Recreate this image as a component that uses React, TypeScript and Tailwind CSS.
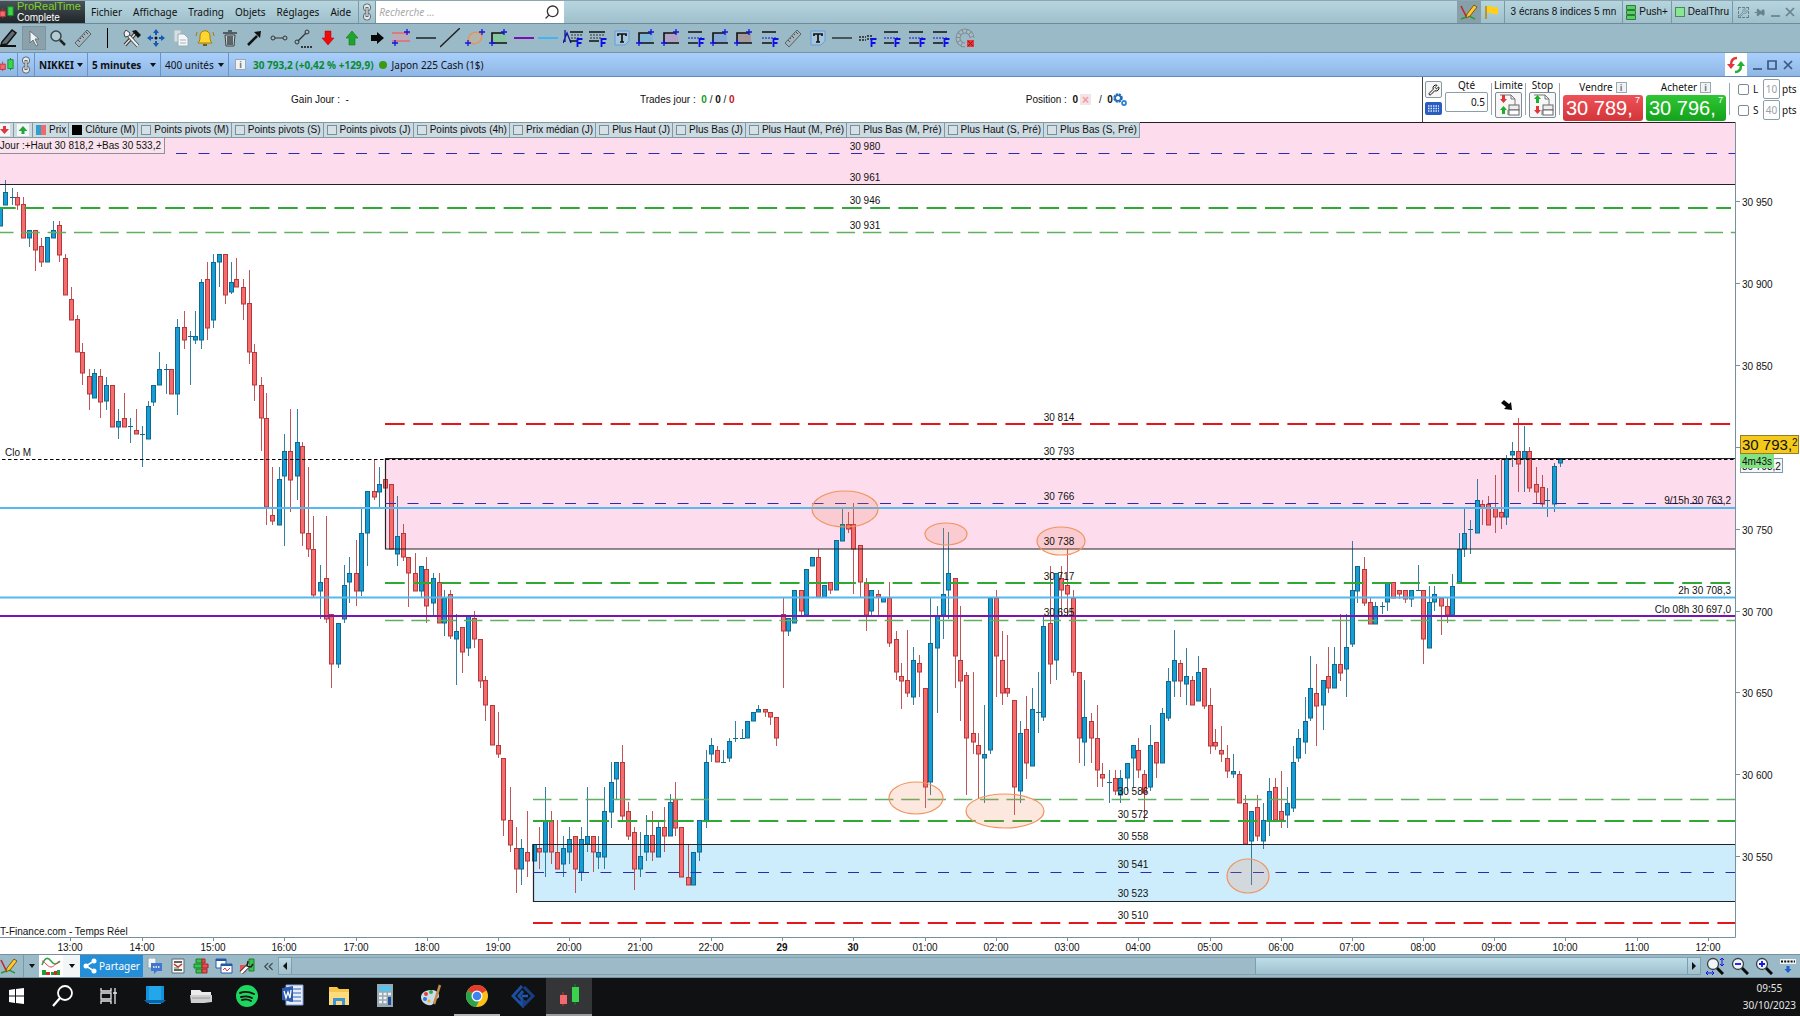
import type { ReactNode } from "react";
import { ChevronsLeft, Pin, Search, Wrench } from "lucide-react";

// dir, x, high, body top, body bottom, low
const CANDLES = `
u 0 208 208 226 226|u 5 180 192 205 205|u 12 188 197 197 205|d 17 192 197 205 210|d 23 197 204 238 238|u 29 230 230 238 247
d 35 230 230 250 271|d 41 238 246 262 267|u 47 237 237 262 262|u 53 221 230 238 238|d 59 221 225 255 262|d 65 254 258 295 295
d 71 287 299 320 320|d 77 315 319 352 352|d 82 343 352 373 385|d 89 369 376 394 410|u 94 369 373 398 398|d 100 369 376 402 418
u 106 377 385 401 410|d 112 385 385 427 427|u 118 409 421 427 439|d 124 393 418 427 427|u 130 418 426 426 443|d 136 409 430 434 434
u 142 426 434 434 467|u 148 401 406 439 439|u 153 385 385 402 406|u 159 352 369 385 385|u 166 364 369 369 394|d 171 369 369 394 394
u 177 319 327 394 415|d 184 311 327 340 349|u 190 331 336 336 385|u 195 311 336 340 344|u 201 279 282 340 349|d 207 262 279 328 340
u 213 254 262 320 328|u 219 254 254 262 287|d 225 254 254 295 304|u 231 262 282 292 294|d 236 258 279 287 287|d 243 279 287 304 320
d 249 270 303 352 364|d 254 344 352 385 401|d 261 377 385 418 451|d 266 393 418 507 525|d 272 467 515 521 525|u 279 467 479 525 525
u 284 434 451 476 546|d 290 409 451 480 512|u 297 409 442 476 500|d 302 442 446 533 546|d 308 467 533 549 557|d 313 516 549 595 597
u 320 565 582 591 619|d 326 516 578 619 623|d 331 614 614 664 688|u 338 623 623 664 668|u 344 565 585 619 623|u 349 557 573 582 603
d 356 540 573 591 606|u 361 508 533 591 596|u 367 491 491 533 566|d 374 459 491 497 500|u 379 467 484 492 507|d 385 479 479 488 488
d 391 484 484 549 549|u 397 496 536 554 566|d 403 524 533 557 561|d 408 557 557 573 607|d 415 553 573 591 591|u 421 566 566 591 597
d 426 557 569 606 623|u 433 573 578 603 616|d 439 573 582 623 623|u 444 590 598 623 636|d 450 590 594 636 639|u 456 614 631 639 685
d 462 627 627 652 673|u 468 615 615 648 656|d 474 611 618 639 648|d 480 639 639 681 688|d 485 676 680 705 721|d 492 705 705 745 745
d 498 712 745 754 758|d 503 758 758 820 836|d 510 787 820 845 852|d 516 827 848 869 893|u 521 839 848 869 885|d 527 811 852 861 877
u 534 844 844 861 861|d 539 827 848 852 869|u 545 787 820 852 877|d 551 811 820 852 864|d 557 820 852 869 869|u 563 836 848 864 877
u 569 827 839 852 864|d 575 836 836 869 893|u 581 827 839 872 881|u 587 787 836 844 852|d 593 836 836 852 872|u 598 836 852 857 869
u 604 787 811 857 869|u 611 762 782 812 828|u 616 762 762 779 799|d 622 745 762 816 821|d 628 802 811 836 840|d 634 827 832 869 890
u 640 832 856 869 877|u 646 815 835 852 861|d 652 811 835 852 861|u 658 820 827 857 857|d 664 807 827 836 852|u 670 794 802 836 836
d 675 782 799 828 836|d 681 827 827 877 877|d 688 845 877 885 885|u 693 852 852 885 885|u 699 820 820 852 861|u 706 750 762 821 828
u 711 738 745 754 762|d 717 746 750 762 762|u 723 750 762 762 762|u 729 738 741 758 762|u 735 721 738 738 742|u 742 729 738 738 738
u 747 721 721 738 738|u 753 712 712 721 721|u 758 705 709 712 712|d 765 709 709 712 717|d 770 712 712 717 725|d 776 717 717 738 746
d 783 598 614 631 688|u 788 618 618 631 636|u 794 590 590 623 623|d 801 590 590 611 615|u 806 569 569 615 615|u 812 557 557 566 566
d 818 549 557 597 597|u 824 585 585 597 597|d 830 582 582 590 594|u 836 540 540 590 590|u 842 508 524 541 541|d 848 512 524 529 533
d 853 503 524 549 594|d 860 545 545 582 597|d 866 578 582 615 631|u 871 590 590 611 615|d 878 590 594 597 615|u 883 597 597 602 602
d 889 582 598 643 647|d 896 631 639 672 680|d 901 663 676 681 709|d 907 630 680 693 697|u 913 647 660 697 705|d 919 655 663 672 697
d 925 688 688 787 808|u 930 598 643 782 795|u 937 606 615 648 713|u 943 528 594 615 639|u 948 532 573 590 619|d 955 578 578 656 688
d 960 606 660 681 721|d 966 672 675 738 795|d 973 672 733 742 754|d 978 733 745 754 799|u 984 705 754 758 803|u 990 598 598 750 754
d 996 590 598 656 697|d 1002 631 660 693 705|d 1007 635 688 693 697|d 1014 700 700 787 815|u 1020 721 733 791 803|d 1026 696 729 763 779
u 1032 688 709 766 766|u 1038 672 712 712 733|u 1043 615 626 717 721|d 1050 566 623 664 684|u 1056 573 573 660 680|d 1061 566 578 590 615
d 1067 549 585 594 615|d 1073 590 598 672 676|d 1079 672 672 738 763|u 1084 680 717 742 766|d 1091 713 721 738 763|d 1097 705 738 770 787
d 1102 763 774 778 787|u 1109 770 782 782 803|d 1115 770 778 791 795|u 1120 770 778 795 803|u 1127 763 763 778 791|u 1133 745 745 758 787
d 1138 738 750 770 778|d 1144 770 774 793 820|u 1150 725 745 787 791|d 1156 742 742 763 778|u 1162 708 713 763 763|u 1168 668 681 718 721
u 1174 630 660 681 697|d 1180 660 663 681 697|u 1186 648 676 684 705|d 1192 676 680 705 705|u 1198 656 672 701 701|d 1204 668 668 706 709
d 1210 688 705 746 754|d 1215 729 742 746 750|d 1221 726 750 754 762|d 1227 745 758 771 778|u 1233 754 771 774 778|d 1239 771 774 803 803
d 1245 795 803 844 844|u 1251 811 811 841 885|d 1257 795 807 836 841|u 1263 803 820 841 849|u 1269 778 791 821 836|d 1275 778 787 820 820
d 1281 771 811 820 828|u 1287 787 803 815 828|u 1293 746 762 808 812|u 1298 729 738 758 762|u 1305 697 721 742 754|u 1310 656 688 718 721
d 1316 664 693 706 746|u 1323 680 680 705 730|d 1328 647 676 688 693|u 1334 647 664 688 688|d 1340 614 664 673 681|u 1346 614 647 669 697
u 1352 541 590 644 647|u 1357 566 566 591 603|d 1364 557 569 603 606|d 1370 598 602 624 624|u 1375 602 606 624 624|u 1382 602 606 606 614
u 1387 582 582 602 611|d 1393 582 582 598 598|d 1399 590 590 594 599|d 1405 590 590 599 603|u 1411 590 590 599 607|u 1418 565 590 590 590
d 1423 590 590 639 664|u 1429 586 602 648 648|u 1434 586 594 602 611|d 1441 598 598 606 635|d 1447 598 606 615 623|u 1452 574 586 615 615
u 1459 533 549 582 582|u 1464 508 533 549 557|u 1470 520 529 529 554|u 1477 479 500 533 533|d 1482 500 504 508 525|d 1488 496 504 525 525
d 1495 475 508 517 533|d 1501 459 512 517 529|u 1506 455 459 517 525|u 1512 442 451 455 467|d 1518 418 451 464 492|u 1524 426 451 459 492
d 1529 447 451 488 492|d 1536 467 484 492 503|d 1542 475 487 504 507|u 1547 488 500 500 517|u 1554 463 466 504 512|u 1560 459 459 463 467`
  .trim()
  .split(/[|\n]/)
  .map((row) => {
    const [dir, ...values] = row.split(" ");
    const [x, high, top, bottom, low] = values.map(Number);
    return { up: dir === "u", x, high, top, bottom, low };
  });

const HOURS: [number, string][] = [
  [70, "13:00"], [142, "14:00"], [213, "15:00"], [284, "16:00"], [356, "17:00"], [427, "18:00"], [498, "19:00"], [569, "20:00"],
  [640, "21:00"], [711, "22:00"], [782, "29"], [853, "30"], [925, "01:00"], [996, "02:00"], [1067, "03:00"], [1138, "04:00"],
  [1210, "05:00"], [1281, "06:00"], [1352, "07:00"], [1423, "08:00"], [1494, "09:00"], [1565, "10:00"], [1637, "11:00"], [1708, "12:00"],
];

const PRICES: [number, string][] = [
  [202, "30 950"], [284, "30 900"], [366, "30 850"], [448, ""], [530, "30 750"], [612, "30 700"], [693, "30 650"], [775, "30 600"], [857, "30 550"],
];

const LEVELS: [number, number, string][] = [
  [865, 146, "30 980"], [865, 177, "30 961"], [865, 200, "30 946"], [865, 225, "30 931"],
  [1059, 417, "30 814"], [1059, 451, "30 793"], [1059, 496, "30 766"], [1059, 541, "30 738"], [1059, 576, "30 717"], [1059, 612, "30 695"],
  [1133, 791, "30 586"], [1133, 814, "30 572"], [1133, 836, "30 558"], [1133, 864, "30 541"], [1133, 893, "30 523"], [1133, 915, "30 510"],
];

const ELLIPSES = [
  [845, 509, 33, 18], [946, 534, 21, 11], [1061, 541, 24, 14], [916, 798, 27, 16], [1005, 811, 39, 17], [1248, 876, 21, 17],
];

const INDICATORS = [
  "Points pivots (M)", "Points pivots (S)", "Points pivots (J)", "Points pivots (4h)", "Prix médian (J)", "Plus Haut (J)", "Plus Bas (J)",
  "Plus Haut (M, Pré)", "Plus Bas (M, Pré)", "Plus Haut (S, Pré)", "Plus Bas (S, Pré)",
];

function Icon({ children, w = 20, h = 20 }: { children: ReactNode; w?: number; h?: number }) {
  return (
    <svg width={w} height={h} viewBox={`0 0 ${w} ${h}`} fill="none" className="shrink-0">
      {children}
    </svg>
  );
}

function Plus({ x, y }: { x: number; y: number }) {
  return <path d={`M${x - 3} ${y}h6M${x} ${y - 3}v6`} stroke="#1414e0" strokeWidth="1.3" />;
}

function F() {
  return <path d="M14.5 19v-8h5M14.5 15h4" stroke="#0d0dea" strokeWidth="1.8" />;
}

function Ruler() {
  return (
    <Icon>
      <path d="M2 15 14 2l4 4L6 19z" fill="#a4b3ba" stroke="#55656c" />
      <path d="m5 12 2 2M7 10l1 1M9 8l2 2M11 6l1 1M13 4l2 2" stroke="#44545c" />
    </Icon>
  );
}

function TextBox() {
  return (
    <Icon>
      <path d="M3 3h14v10l-4 4H3z" fill="#a6c6dc" stroke="#629be0" />
      <path d="M6 8V6h8v2M10 6v8M8 14h4" stroke="#111" strokeWidth="1.7" />
    </Icon>
  );
}

function FibLines() {
  return (
    <Icon>
      <path d="M3 4h14M3 15h10" stroke="#111" strokeWidth="1.6" />
      <path d="M3 10h14" stroke="#1414e0" strokeDasharray="2 1" />
      <F />
    </Icon>
  );
}

function RectTool({ fill }: { fill: string }) {
  return (
    <Icon>
      <path d="M3 5h14v10H3z" fill={fill} />
      <path d="M3 15V5h12M3 15h15" stroke="#111" strokeWidth="1.6" />
      <Plus x={15} y={4} />
      <Plus x={3} y={15} />
    </Icon>
  );
}

function FlatLine({ color, width = 2 }: { color: string; width?: number }) {
  return (
    <Icon>
      <path d="M0 10h20" stroke={color} strokeWidth={width} />
    </Icon>
  );
}

function Chain() {
  return (
    <svg width="10" height="18" viewBox="0 0 10 18" fill="none" stroke="#5c666b" className="shrink-0">
      <rect x="1.5" y="1" width="7" height="7" rx="3" fill="#e5e9eb" />
      <rect x="1.5" y="10" width="7" height="7" rx="3" fill="#e5e9eb" />
      <path d="M5 4v10" stroke="#5c666b" strokeWidth="3" />
      <path d="M5 5v8" stroke="#eef1f2" strokeWidth="1.2" />
    </svg>
  );
}

function CandlesIcon({ size = 16 }: { size?: number }) {
  return (
    <svg width={size} height={size} viewBox="0 0 16 16" className="shrink-0">
      <path d="M3 4v11" stroke="#c33" />
      <rect x="0" y="7" width="6" height="6" fill="#f4696b" stroke="#b8383b" />
      <path d="M12 0v14" stroke="#0a7a20" />
      <rect x="9" y="2" width="6" height="10" fill="#3bd34f" stroke="#178a2a" />
    </svg>
  );
}

function DrawIcon() {
  return (
    <Icon w={18} h={18}>
      <path d="M1 3l5 10 6-5" stroke="#c0282c" strokeWidth="1.6" />
      <path d="M1 16l8-3 6 3" stroke="#2a9a3a" strokeWidth="1.6" />
      <path d="M6 15l1-4 7-9 3 2-7 9z" fill="#ffc933" stroke="#7a5a10" />
    </Icon>
  );
}

const TOOLS: [string, ReactNode][] = [
  ["Crayon", <Icon><path d="M3 14 13 2l4 3L8 16l-6 1z" fill="#5d6d74" stroke="#111" strokeWidth="1.5" /><path d="M1 18h16" stroke="#111" strokeWidth="2" /></Icon>],
  ["Sélection", <Icon><path d="M6 3v12l3-3 3 6 2-1-3-6h4z" fill="#eef2f4" stroke="#66747b" /></Icon>],
  ["Loupe", <Icon><circle cx="8" cy="8" r="5" fill="#b4cbd4" stroke="#39474e" strokeWidth="1.5" /><path d="m12 12 5 5" stroke="#222" strokeWidth="2.5" /></Icon>],
  ["Règle", <Ruler />],
  ["", <span className="h-5 w-px bg-black" />],
  ["Outils", <Icon><path d="m3 17 10-11" stroke="#333" strokeWidth="3.5" /><path d="m3 17 10-11" stroke="#e8e8e8" strokeWidth="1.5" /><path d="M10 3l4-1 5 5-3 3z" fill="#111" /><path d="m5 6 11 12" stroke="#444" strokeWidth="3.5" /><path d="m5 6 11 12" stroke="#f2f2f2" strokeWidth="2" /><path d="M2 5l2-3 4 3-1 3-4 1z" fill="#f2f2f2" stroke="#444" /></Icon>],
  ["Déplacer", <Icon><path d="M10 1l3 4H7zM10 19l-3-4h6zM1 10l4-3v6zM19 10l-4 3V7z" fill="#1558b8" /><path d="M10 4v3M10 13v3M4 10h3M13 10h3" stroke="#1558b8" strokeWidth="2" /><circle cx="10" cy="10" r="1.5" fill="#111" /></Icon>],
  ["Copier", <Icon><path d="M3 2h7v12H3z" fill="#d5dee2" stroke="#a9b9c0" /><path d="M7 6h6l4 4v8H7z" fill="#f4f7f8" stroke="#9aabb3" /><path d="M9 12h6M9 15h6" stroke="#a3b4bc" /></Icon>],
  ["Alerte", <Icon><path d="M3 15c2-2 2-4 2-7 0-7 10-7 10 0 0 3 0 5 2 7z" fill="#ffd52e" stroke="#a67c00" /><path d="M8 16h4v2H8z" fill="#7c5c00" /><path d="M2 4 1 8M18 4l1 4" stroke="#a67c00" /></Icon>],
  ["Supprimer", <Icon><path d="M5 7h10l-1 11H6z" fill="#c8ced0" stroke="#3a4246" /><path d="M3 5h14M8 3h4M8 8v9M10 8v9M12 8v9" stroke="#3a4246" strokeWidth="1.5" /></Icon>],
  ["Flèche", <Icon><path d="m4 17 9-9" stroke="#111" strokeWidth="2.5" /><path d="M10 4l7-1-1 7z" fill="#111" /></Icon>],
  ["Segment", <Icon><path d="M6 10h8" stroke="#333" /><circle cx="4" cy="10" r="2" stroke="#333" /><circle cx="16" cy="10" r="2" stroke="#333" /></Icon>],
  ["Segment alerte", <Icon><path d="m5 13 8-8" stroke="#333" strokeWidth="1.3" /><circle cx="4" cy="14" r="2" stroke="#333" /><circle cx="14" cy="4" r="2" stroke="#333" /><path d="M8 19h11" stroke="#111" strokeWidth="1.5" strokeDasharray="2 1" /></Icon>],
  ["Flèche bas", <Icon><path d="M7 3h6v7h3l-6 7-6-7h3z" fill="#f00c0c" stroke="#a80000" strokeWidth=".5" /></Icon>],
  ["Flèche haut", <Icon><path d="M7 17h6v-7h3l-6-7-6 7h3z" fill="#20a52c" stroke="#0a6a14" strokeWidth=".5" /></Icon>],
  ["Flèche droite", <Icon><path d="M4 7h6V4l7 6-7 6v-3H4z" fill="#080808" /></Icon>],
  ["Zone", <Icon><path d="M2 5h16v8H2z" fill="#b9aeb8" /><path d="M1 5h18M1 13h18" stroke="#e86a72" strokeWidth="1.5" /><Plus x={16} y={4} /><Plus x={4} y={15} /></Icon>],
  ["Ligne horizontale", <FlatLine color="#3c484d" />],
  ["Droite", <Icon><path d="M0 19 20 0" stroke="#222" strokeWidth="1.5" /></Icon>],
  ["Ellipse", <Icon><ellipse cx="10" cy="10" rx="7" ry="5.5" fill="#b5b4aa" stroke="#ec8f52" strokeWidth="1.3" transform="rotate(-25 10 10)" /><Plus x={17} y={4} /><Plus x={3} y={15} /></Icon>],
  ["Rectangle vert", <RectTool fill="#86c4a2" />],
  ["Ligne violette", <FlatLine color="#7a10b4" />],
  ["Ligne bleue", <FlatLine color="#43b4f0" />],
  ["Retracement", <Icon><path d="M2 2v12M0 15l4-10 4 10" stroke="#1414a0" strokeWidth="1.3" /><path d="M7 4h13M7 13h7" stroke="#111" strokeWidth="1.5" /><path d="M8 7h11M8 10h8" stroke="#333" strokeDasharray="2 1" /><F /></Icon>],
  ["Extension", <Icon><path d="M2 4h16M2 13h10" stroke="#111" strokeWidth="1.5" /><path d="M3 7h14M3 10h12" stroke="#333" strokeDasharray="2 1" /><F /></Icon>],
  ["Texte", <TextBox />],
  ["Rectangle bleu", <RectTool fill="#82b6d6" />],
  ["Rectangle mauve", <RectTool fill="#b0a4c4" />],
  ["Fibonacci 1", <FibLines />],
  ["Rectangle azur", <RectTool fill="#86a9d6" />],
  ["Rectangle brun", <RectTool fill="#a39a9e" />],
  ["Fibonacci 2", <FibLines />],
  ["Règle 2", <Ruler />],
  ["Texte 2", <TextBox />],
  ["Ligne grise", <FlatLine color="#4a555a" />],
  ["Niveaux", <Icon><path d="M2 9h7M2 12h7M10 8h6M10 11h4" stroke="#222" strokeWidth="1.5" strokeDasharray="2 1" /><F /></Icon>],
  ["Fibonacci 3", <FibLines />],
  ["Fibonacci 4", <FibLines />],
  ["Fibonacci 5", <FibLines />],
  ["Réinitialiser", <Icon><path d="M10 17a7 7 0 1 1 7-7" stroke="#7c8d95" strokeWidth="5" /><path d="M10 17a7 7 0 1 1 7-7" stroke="#a9bbc3" strokeWidth="3" strokeDasharray="3 1" /><rect x="12" y="12" width="7" height="7" fill="#e8383c" /><path d="m13 13 5 5M18 13l-5 5" stroke="#8c1518" /></Icon>],
];

function MenuBar() {
  return (
    <header className="flex h-6 items-stretch border-b border-[#6d8b98] border-t border-t-[#8ba6b1] bg-linear-to-b from-[#b6d5df] to-[#9fc0cc]">
      <div className="flex w-[85px] items-center gap-[3px] bg-linear-to-b from-[#4a5358] to-[#1f2529] font-[family-name:'Liberation_Sans',sans-serif]">
        <CandlesIcon size={14} />
        <div className="leading-[11px] whitespace-nowrap">
          <div className="text-[11px] text-[#7bd32c]">ProRealTime</div>
          <div className="text-[10px] text-white">Complete</div>
        </div>
      </div>
      <nav className="flex items-center gap-[11px] border-r border-[#7b99a5] pr-[7px] pl-[6px]">
        {["Fichier", "Affichage", "Trading", "Objets", "Réglages", "Aide"].map((item) => (
          <button key={item}>{item}</button>
        ))}
      </nav>
      <span className="flex w-[17px] items-center justify-center border-r border-[#7b99a5]">
        <Chain />
      </span>
      <label className="flex w-[188px] items-center bg-white pr-1">
        <input aria-label="Recherche" placeholder="Recherche ..." className="min-w-0 flex-1 pl-[3px] text-[10px] italic outline-none placeholder:text-[#a9a9a9]" />
        <Search size={16} className="-scale-x-100 text-[#333]" />
      </label>
      <div className="ml-auto flex items-stretch font-[family-name:'Liberation_Sans',sans-serif] whitespace-nowrap">
        <button aria-label="Dessin" className="flex w-6 items-center justify-center bg-[#869fa9]"><DrawIcon /></button>
        <button aria-label="Drapeau" className="flex w-6 items-center justify-center border-r border-[#7b99a5]">
          <Icon w={16} h={16}>
            <path d="M2 2v13" stroke="#b98500" strokeWidth="1.5" />
            <path d="M3 2c4-1 6 2 11 1v7c-5 1-7-2-11-1z" fill="#ffcf1c" />
          </Icon>
        </button>
        <button className="border-r border-[#7b99a5] px-[6px]">3 écrans 8 indices 5 mn</button>
        <button className="flex items-center gap-[3px] border-r border-[#7b99a5] px-[3px]">
          <Icon w={10} h={15}>
            <path d="M.5.5h9v4h-9zM.5 5.5h9v4h-9zM.5 10.5h9v4h-9z" fill="#57cf66" stroke="#2d7d38" />
          </Icon>
          Push+
        </button>
        <button className="flex items-center gap-[3px] border-r border-[#7b99a5] px-[3px]">
          <span className="size-[10px] border border-[#4a8c55] bg-[#8ae690]" />
          DealThru
        </button>
        <div className="flex w-[67px] items-center justify-around px-[2px] text-[#69818b]">
          <span className="border border-dashed border-[#69818b]"><Wrench size={9} /></span>
          <Pin size={11} className="rotate-90 fill-current" />
          <WindowGlyph kind="min" />
          <WindowGlyph kind="close" />
        </div>
      </div>
    </header>
  );
}

function WindowGlyph({ kind }: { kind: "min" | "max" | "close" }) {
  const d = { min: "M1 9h9", max: "M1 1h8v8H1z", close: "m1 1 8 8M9 1 1 9" }[kind];
  return (
    <button aria-label={kind}>
      <Icon w={10} h={10}>
        <path d={d} stroke="currentColor" strokeWidth="1.7" />
      </Icon>
    </button>
  );
}

function Toolbar() {
  return (
    <div className="h-[29px] border-b border-[#7893a6] bg-[#9bbac7]">
      <div className="-ml-[3px] grid h-full w-[980px] grid-cols-[repeat(40,minmax(0,1fr))] items-center">
        {TOOLS.map(([name, icon]) =>
          name ? (
            <button key={name} aria-label={name} className={`flex h-6 items-center justify-center ${name === "Sélection" ? "border border-[#7d949e] bg-[#8ba2ac]" : ""}`}>
              {icon}
            </button>
          ) : (
            <span key="sep" className="flex justify-center">{icon}</span>
          ),
        )}
      </div>
    </div>
  );
}

function Picker({ label, bold, className }: { label: string; bold?: boolean; className: string }) {
  return (
    <button className={`flex items-center justify-between border-r border-[#6d92c2] px-1 ${bold ? "font-bold" : ""} ${className}`}>
      {label}
      <Caret />
    </button>
  );
}

function Caret() {
  return (
    <svg width="6" height="4" viewBox="0 0 6 4" className="shrink-0">
      <path d="M0 0h6L3 4z" fill="#111" />
    </svg>
  );
}

function Info() {
  return <span className="flex size-[11px] items-center justify-center border border-[#9aa8b0] bg-[#f0f3f5] text-[9px] leading-none font-bold text-[#777]">i</span>;
}

function InstrumentBar() {
  return (
    <div className="flex h-6 items-stretch border-b border-[#6089c0] bg-linear-to-b from-[#a9cffd] to-[#90b6e4] whitespace-nowrap">
      <span className="flex w-[18px] items-center border-r border-[#6d92c2]"><CandlesIcon size={14} /></span>
      <span className="flex w-[17px] items-center justify-center border-r border-[#6d92c2]"><Chain /></span>
      <Picker label="NIKKEI" bold className="w-[53px]" />
      <Picker label="5 minutes" bold className="w-[73px]" />
      <Picker label="400 unités" className="w-[68px]" />
      <div className="flex items-center pl-[6px]">
        <Info />
        <span className="pl-[7px] font-bold text-[#078c28]">30 793,2 (+0,42 % +129,9)</span>
        <span className="mx-[5px] size-2 rounded-full bg-[#3b9b0e]" />
        <span>Japon 225 Cash (1$)</span>
      </div>
      <div className="ml-auto flex items-stretch">
        <button aria-label="Rafraîchir" className="flex w-[22px] items-center justify-center bg-white">
          <Icon w={18} h={18}>
            <path d="M10 2C5 2 4 5 4 9" stroke="#e2383c" strokeWidth="2.5" />
            <path d="M0 8h8l-4 5z" fill="#e2383c" />
            <path d="M8 16c5 0 6-3 6-7" stroke="#22b32c" strokeWidth="2.5" />
            <path d="M10 10h8l-4-5z" fill="#22b32c" />
          </Icon>
        </button>
        <div className="flex w-[53px] items-center justify-around pr-1 pl-[2px] text-[#3a5884]">
          <WindowGlyph kind="min" />
          <WindowGlyph kind="max" />
          <WindowGlyph kind="close" />
        </div>
      </div>
    </div>
  );
}

function OrderIcon({ flip }: { flip?: boolean }) {
  return (
    <Icon w={22} h={22}>
      <path d="M2 1h11l4 4v6M10 16v5" stroke="#777" />
      <path d="M13 1v4h4" stroke="#777" />
      <rect x="11" y="11" width="10" height="5" fill="#eee" stroke="#666" />
      <rect x="11" y="16" width="10" height="5" fill="#fff" stroke="#666" />
      <path d={flip ? "M5.5 1 9 5H7v4H4V5H2z" : "M4 1h3v4h2L5.5 9 2 5h2z"} fill={flip ? "#1fae2a" : "#e33238"} />
      <path d={flip ? "M4 12h3v4h2l-3.5 4L2 16h2z" : "M5.5 12 9 16H7v4H4v-4H2z"} fill={flip ? "#e33238" : "#1fae2a"} />
    </Icon>
  );
}

function PriceButton({ label, price, className }: { label: string; price: string; className: string }) {
  return (
    <div className="flex w-20 flex-col items-center">
      <span className="flex h-4 items-center gap-[3px]">
        {label}
        <Info />
      </span>
      <button className={`flex h-[26px] w-full items-start justify-between rounded-[3px] px-[3px] font-[family-name:'Liberation_Sans',sans-serif] text-[20px] leading-[27px] text-white ${className}`}>
        {price}
        <sup className="pt-1 text-[9px] leading-[10px]">7</sup>
      </button>
    </div>
  );
}

function TradePanel() {
  return (
    <section className="flex h-[45px] items-stretch bg-white">
      <div className="flex flex-1 items-center justify-evenly pr-1 font-[family-name:'Liberation_Sans',sans-serif] text-[10px] whitespace-pre">
        <span>Gain Jour :  -</span>
        <span>
          Trades jour :  <b className="text-[#159a22]">0</b> / <b>0</b> / <b className="text-[#c8141c]">0</b>
        </span>
        <span className="flex items-center">
          Position :  <b>0</b>
          <span className="mr-2 ml-[2px] flex size-[11px] items-center justify-center bg-[#f5e4e6] text-[12px] leading-none font-bold text-[#f29ba0]">×</span>/  <b>0</b>
          <Icon w={14} h={14}>
            <circle cx="5" cy="5" r="3.5" stroke="#2468b8" strokeWidth="2.5" strokeDasharray="2 .8" />
            <circle cx="5" cy="5" r="2.8" stroke="#2468b8" strokeWidth="1.5" />
            <circle cx="11" cy="10" r="2" stroke="#2f86d8" strokeWidth="1.8" />
          </Icon>
        </span>
      </div>
      <div className="flex items-start gap-[3px] border-l border-[#444] pt-[2px] pl-[2px]">
        <div className="flex flex-col gap-1 pt-[2px]">
          <button aria-label="Réglages" className="flex size-[17px] items-center justify-center rounded-[2px] border border-[#8a97a0] bg-[#f6f6f6]"><Wrench size={12} /></button>
          <button aria-label="Clavier">
            <Icon w={17} h={13}>
              <rect width="17" height="13" rx="2" fill="#2a5dc0" />
              <path d="M3 4h11M3 6.5h11M3 9h11" stroke="#dce8ff" strokeWidth="1.5" strokeDasharray="1.5 1" />
            </Icon>
          </button>
        </div>
        <label className="flex w-[43px] flex-col items-center">
          <span className="h-[13px] leading-[13px]">Qté</span>
          <input defaultValue="0.5" className="h-5 w-full rounded-[2px] border border-[#8c9fa8] pr-[2px] text-right" />
        </label>
        <span className="mt-1 h-8 w-px bg-[#9aa9b0]" />
        <div className="flex w-[27px] flex-col items-center">
          <span className="h-[13px] leading-[13px]">Limite</span>
          <button aria-label="Limite" className="flex h-[26px] w-full items-center justify-center rounded-[2px] border border-[#7d8d95] bg-[#f7f7f7]"><OrderIcon /></button>
        </div>
        <span className="mt-1 h-8 w-px bg-[#9aa9b0]" />
        <div className="flex w-[27px] flex-col items-center">
          <span className="h-[13px] leading-[13px]">Stop</span>
          <button aria-label="Stop" className="flex h-[26px] w-full items-center justify-center rounded-[2px] border border-[#7d8d95] bg-[#f7f7f7]"><OrderIcon flip /></button>
        </div>
        <span className="mt-1 h-8 w-px bg-[#9aa9b0]" />
        <PriceButton label="Vendre" price="30 789," className="bg-linear-to-b from-[#ee5258] to-[#d23439]" />
        <PriceButton label="Acheter" price="30 796," className="bg-linear-to-b from-[#2fc534] to-[#12a31c]" />
        <span className="mt-1 h-8 w-px bg-[#9aa9b0]" />
        <div className="flex flex-col gap-px pl-[5px]">
          {[["L", "10"], ["S", "40"]].map(([side, pts]) => (
            <div key={side} className="flex h-5 items-center">
              <label className="flex w-[25px] items-center gap-1">
                <input type="checkbox" className="size-[11px] appearance-none rounded-[2px] border border-[#7a8d96]" />
                {side}
              </label>
              <input aria-label={`${side} pts`} defaultValue={pts} className="h-full w-[17px] rounded-[2px] border border-[#8c9fa8] text-center text-[#98a3a9]" />
              <span className="w-5 pl-[2px]">pts</span>
            </div>
          ))}
        </div>
      </div>
    </section>
  );
}

function Legend() {
  const cell = "flex h-4 items-center gap-[3px] border border-l-0 border-[#8498a0] bg-[#ccdae1] pr-[2px] pl-[3px]";
  return (
    <div className="absolute top-0 left-0 font-[family-name:'Liberation_Sans',sans-serif] text-[10px] leading-[14px] whitespace-nowrap">
      <div className="flex">
        <button aria-label="Descendre" className="flex h-4 w-[14px] items-center border border-l-0 border-[#8498a0] bg-[#ccdae1]">
          <Icon w={10} h={12}><rect width="10" height="12" fill="#f4f6f7" /><path d="M3 2h3v3h3l-4.5 5L0 5h3z" fill="#e0383c" /></Icon>
        </button>
        <button aria-label="Monter" className="flex h-4 w-[19px] items-center justify-center border border-l-0 border-[#8498a0] bg-[#ccdae1]">
          <Icon w={12} h={12}><rect width="12" height="12" fill="#f4f6f7" /><path d="M4.5 10h3V7h3L6 2 1.5 7h3z" fill="#22a83a" /></Icon>
        </button>
        <span className={cell}>
          <i className="h-[10px] w-[10px] bg-linear-to-r from-[#2f9fd0] from-50% to-[#f0696c] to-50%" />
          Prix
        </span>
        <span className={cell}>
          <i className="size-[10px] bg-black" />
          Clôture (M)
        </span>
        {INDICATORS.map((name) => (
          <label key={name} className={cell}>
            <input type="checkbox" className="size-[10px] appearance-none border border-[#7b8f98] bg-[#d5e1e6]" />
            {name}
          </label>
        ))}
      </div>
      <div className="flex h-4 w-[165px] items-center justify-end border-r border-b border-[#8f8f9c] bg-[#fbe3ee] pr-[3px]">Jour :+Haut 30 818,2 +Bas 30 533,2</div>
    </div>
  );
}

function Chart() {
  return (
    <main className="relative">
      <svg viewBox="0 122 1800 832" className="block h-auto w-full bg-white font-[family-name:'Liberation_Sans',sans-serif] text-[10px]" fill="#111">
        {/* zones */}
        <path d="M0 122h1735v62H0zM385 459h1350v90H385z" fill="#fddcee" />
        <path d="M533 844h1202v58H533z" fill="#cdecfc" />

        {CANDLES.map(({ up, x, high, top, bottom, low }) => (
          <g key={x} stroke={up ? "#11688f" : "#b5383b"} fill={up ? "#179dd6" : "#f46c6e"}>
            <path d={`M${x + 0.5} ${high}V${top}M${x + 0.5} ${bottom}V${low}`} strokeOpacity=".85" />
            {top === bottom ? <path d={`M${x - 2} ${top + 0.5}h5`} /> : <rect x={x - 1.5} y={top + 0.5} width={4} height={bottom - top - 0.5} />}
          </g>
        ))}

        {/* levels */}
        <g fill="none">
          <path d="M0 184.5h1735M1735 458.5H385.5v90.5H1735M1735 844.5H533.5v57H1735" stroke="#222" strokeWidth="1.2" />
          <path d="M0 122.5h1735" stroke="#222" />
          <path d="M2 459.5h1733" stroke="#000" strokeDasharray="3.5 2.5" />
          <g stroke="#2c2cb0" strokeDasharray="11 11.5">
            <path d="M176 153.5h1559M385 503.5h1350M533 872.5h1202" />
          </g>
          <g stroke="#2fa834" strokeWidth="2" strokeDasharray="19.7 8.5">
            <path d="M-4 208h1735M385 583h1345M533 821h1202" />
          </g>
          <g stroke="#5fb060" strokeWidth="1.3" strokeDasharray="18.5 7.8">
            <path d="M-5 232.5h1740M385 620.5h1350M533 799.5h1202" />
          </g>
          <g stroke="#e3171b" strokeWidth="2" strokeDasharray="19.7 8.5">
            <path d="M385 424h1346M533 923h1202" />
          </g>
          <path d="M0 508h1735M0 597.5h1735" stroke="#55b8ee" strokeWidth="2" />
          <path d="M0 616h1735" stroke="#7a14b2" strokeWidth="2" />
        </g>
        {ELLIPSES.map(([cx, cy, rx, ry]) => (
          <ellipse key={cx} cx={cx} cy={cy} rx={rx} ry={ry} fill="#f08050" fillOpacity=".18" stroke="#f0945f" strokeWidth="1.2" />
        ))}
        <path d="M1501 403l3-3 5 4 2-2 1 8-8-1 2-2z" fill="#080808" />

        {/* labels */}
        {LEVELS.map(([x, y, text]) => (
          <text key={text} x={x} y={y + 4} textAnchor="middle">{text}</text>
        ))}
        <text x="5" y="456">Clo M</text>
        <text x="1731" y="504" textAnchor="end">9/15h 30 763,2</text>
        <text x="1731" y="594" textAnchor="end">2h 30 708,3</text>
        <text x="1731" y="613" textAnchor="end">Clo 08h 30 697,0</text>
        <text x="0" y="935">T-Finance.com - Temps Réel</text>

        {/* axes */}
        <path d="M1735.5 122v815.5H0" fill="none" stroke="#76909c" />
        {PRICES.map(([y, text]) => (
          <g key={y}>
            <path d={`M1736 ${y - 0.5}h4`} stroke="#76909c" />
            <text x="1742" y={y + 4}>{text}</text>
          </g>
        ))}
        {HOURS.map(([x, text]) => (
          <g key={x}>
            <path d={`M${x + 0.5} 938v3`} stroke="#76909c" />
            <text x={x} y="951" textAnchor="middle" fontWeight={text.length < 3 ? 700 : 400}>{text}</text>
          </g>
        ))}
        <rect x="1740.5" y="458.5" width="42" height="14" fill="#f4f7fa" stroke="#8499a6" />
        <text x="1742" y="470">30 793,2</text>
        <rect x="1740" y="454" width="34" height="14" fill="#82e284" />
        <text x="1742" y="465">4m43s</text>
        <rect x="1740.5" y="435.5" width="58" height="18" fill="#f3ca1c" stroke="#927d2c" />
        <text x="1742" y="450" className="text-[15px]">30 793,</text>
        <text x="1792" y="446">2</text>
      </svg>
      <Legend />
    </main>
  );
}

function Lens({ sign, arrows }: { sign?: string; arrows?: boolean }) {
  return (
    <Icon w={18} h={18}>
      <path d="m10 10 7 7" stroke="#0b0b0b" strokeWidth="3" />
      <circle cx="7" cy="7" r="5.5" fill="#f1f5f8" stroke="#39434a" strokeWidth="1.3" />
      {sign && <path d={sign} stroke="#1414e6" strokeWidth="1.8" />}
      {arrows && <path d="M0 16h8M2 14l-2 2 2 2M6 14l2 2-2 2M16 1v8M14 3l2-2 2 2M14 7l2 2 2-2" stroke="#1414e6" />}
    </Icon>
  );
}

function BottomBar() {
  const cell = "flex w-[23px] items-center justify-center";
  return (
    <div className="flex h-6 items-stretch border-t border-b border-[#7890a0] bg-[#9bbac7]">
      <button aria-label="Dessin" className="flex w-6 items-center border-r border-[#7b99a5]"><DrawIcon /></button>
      <button aria-label="Options dessin" className="flex w-[15px] items-center justify-center"><Caret /></button>
      <button aria-label="Indicateurs" className="flex w-6 items-center justify-center bg-white">
        <Icon w={20} h={20}>
          <path d="M1 9c3-8 6-8 9-4s5 4 9 0" stroke="#35a045" strokeWidth="1.5" />
          <path d="M1 5c3 0 5 6 9 6s5-6 9-5" stroke="#d2474a" />
          <path d="M1 19v-5h4v5zM10 19v-3h3v3zM16 19v-5h3v5z" fill="#18a030" />
          <path d="M5 19v-3h4v3zM13 19v-4h3v4z" fill="#d02a2e" />
        </Icon>
      </button>
      <button aria-label="Options indicateurs" className="flex w-[17px] items-center justify-center bg-[#f3f6f7]"><Caret /></button>
      <button className="flex w-[63px] items-center justify-between bg-[#258ed8] px-[3px] text-[10px] text-white">
        <Icon w={14} h={16}>
          <path d="M11 3 3 8l8 5" stroke="#fff" strokeWidth="1.5" />
          <circle cx="11" cy="3" r="2.5" fill="#fff" />
          <circle cx="3" cy="8" r="2.5" fill="#fff" />
          <circle cx="11" cy="13" r="2.5" fill="#fff" />
        </Icon>
        Partager
      </button>
      <button aria-label="Discussion" className={cell}>
        <Icon w={16} h={16}><path d="M1 0h8v10H1z" fill="#f4f7fa" stroke="#8fa3ad" /><path d="M4 5h11v8h-5l-3 3v-3H4z" fill="#3f76cf" /><path d="M6 9h7" stroke="#fff" strokeWidth="1.5" strokeDasharray="1.5 1" /></Icon>
      </button>
      <button aria-label="Rapport" className={cell}>
        <Icon w={14} h={16}><path d="M1 1h12v14H1z" fill="#f7f7f7" stroke="#5d6a70" /><path d="M3 4h8M3 12h8" stroke="#333" strokeWidth="1.5" /><path d="m3 6 4 3 4-3" stroke="#d5282c" strokeWidth="1.5" /><path d="M3 10h5" stroke="#2a9a3a" /></Icon>
      </button>
      <button aria-label="Carnet" className={cell}>
        <Icon w={16} h={16}><path d="M3 1h6v4H3zM1 6h8v4H1zM3 11h6v4H3z" fill="#39c34c" stroke="#17802a" /><path d="M9 1h3v4H9zM9 6h6v4H9zM9 11h5v4H9z" fill="#ec4d52" stroke="#a3262a" /></Icon>
      </button>
      <button aria-label="Fenêtres" className={cell}>
        <Icon w={18} h={16}><path d="M1 1h10v9H1z" fill="#fff" stroke="#2458a8" /><path d="M1 2h10" stroke="#2458a8" strokeWidth="2" /><path d="M6 6h11v9H6z" fill="#fff" stroke="#2458a8" /><path d="M6 7h11" stroke="#2458a8" strokeWidth="2" /><path d="m8 12 2-2 2 3 3-3" stroke="#d5383c" /></Icon>
      </button>
      <button aria-label="Configurer" className={cell}>
        <Icon w={16} h={16}><path d="M1 7h6v7H1z" fill="#ec4d52" /><path d="M10 1h5v12h-5z" fill="#39c34c" stroke="#17802a" /><path d="m2 15 8-8" stroke="#222" strokeWidth="4" /><path d="m2 15 8-8" stroke="#fff" strokeWidth="2.5" /><path d="M9 3 8 8l4 1 2-3" stroke="#222" strokeWidth="1.5" /></Icon>
      </button>
      <button aria-label="Réduire" className="flex w-5 items-center justify-center text-[#3c4a51]"><ChevronsLeft size={15} /></button>
      <button aria-label="Défiler à gauche" className="my-[2px] flex w-[14px] items-center justify-center border border-[#7f9eab] bg-linear-to-b from-[#bcdbe6] to-[#9fc0cc]">
        <svg width="4" height="8" viewBox="0 0 4 8"><path d="M4 0v8L0 4z" fill="#111" /></svg>
      </button>
      <div className="my-[2px] flex flex-1 items-stretch border-y border-[#83a1ae] bg-[#9cbac8]">
        <span className="flex-1" />
        <span className="w-[31%] border-l border-[#7f9eab] bg-linear-to-b from-[#bddde8] to-[#9fc1cf]" />
      </div>
      <button aria-label="Défiler à droite" className="my-[2px] flex w-[14px] items-center justify-center border border-[#7f9eab] bg-linear-to-b from-[#bcdbe6] to-[#9fc0cc]">
        <svg width="4" height="8" viewBox="0 0 4 8"><path d="M0 0v8l4-4z" fill="#111" /></svg>
      </button>
      <div className="flex w-[99px] items-center justify-between pr-1 pl-[5px]">
        <button aria-label="Ajuster"><Lens arrows /></button>
        <button aria-label="Zoom arrière"><Lens sign="M4 7h6" /></button>
        <button aria-label="Zoom avant"><Lens sign="M4 7h6M7 4v6" /></button>
        <button aria-label="Plus d'outils">
          <Icon w={16} h={16}><path d="M0 1h16v5H0z" fill="#eef3f5" /><path d="M1 3.5h14" stroke="#111" strokeWidth="2" strokeDasharray="2 1.2" /><path d="M6.5 8h3v3h2L8 15l-3.5-4h2z" fill="#1d5fd0" /></Icon>
        </button>
      </div>
    </div>
  );
}

const APPS: [string, ReactNode][] = [
  ["Démarrer", <path d="M4 6l6-1v6.5H4zM11 5l8-1v7.5h-8zM4 12.5h6V19l-6-1zM11 12.5h8V20l-8-1z" fill="#fff" />],
  ["Rechercher", <g fill="none" stroke="#fff"><circle cx="14" cy="9" r="7" strokeWidth="1.8" /><path d="m9 14-7 8" strokeWidth="2.2" /></g>],
  ["Vue des tâches", <path d="M4 4v3h10V4M4 20v-3h10v3M4 9h10v6H4zM18 4v16M16 9h4" fill="none" stroke="#e8e8e8" strokeWidth="1.3" />],
  ["Bureau", <><path d="M3 2h18v14H3z" fill="#1691dc" /><path d="M6 2h12v18H6z" fill="#24a6ea" /><path d="M1 16h22l-3 3H4z" fill="#0d63a8" /></>],
  ["Scanner", <><path d="M2 6h9l2 2h9v9H2z" fill="#ececec" /><path d="M1 11h22v7l-8 1H2z" fill="#cfcfcf" /><path d="M3 14h18" stroke="#9a9a9a" /></>],
  ["Spotify", <><circle cx="12" cy="12" r="11" fill="#1ed760" /><path d="M5 9c5-2 10-1 14 1M6 13c4-1 8-1 11 1M7 16c3-1 6-1 9 1" fill="none" stroke="#111" strokeWidth="1.9" strokeLinecap="round" /></>],
  ["Word", <><path d="M5 1h17v20H5z" fill="#e7eefa" stroke="#7f9fd6" /><path d="M8 5h12M8 9h12M8 13h12M8 17h12" stroke="#6f92d0" strokeWidth="1.3" /><path d="M1 4l11-2v16L1 16z" fill="#2c5bb0" /><path d="m3 7 2 7 2-6 2 6 1-8" fill="none" stroke="#fff" strokeWidth="1.3" /></>],
  ["Explorateur", <><path d="M2 3h8l2 2h10v16H2z" fill="#f6c64b" /><path d="M2 8h20v13H2z" fill="#fcdc7c" /><path d="M6 21v-7h12v7h-3v-4H9v4z" fill="#3f93d8" /></>],
  ["Calculatrice", <><path d="M4 0h16v23H4z" fill="#9aa8b2" /><path d="M6 2h12v5H6z" fill="#56c4f0" /><path d="M6 10h12M6 14h8M6 18h8" stroke="#eef2f5" strokeWidth="2.5" strokeDasharray="3 1.5" /><path d="M15 13h3v8h-3z" fill="#1f4f9c" /></>],
  ["Paint", <><path d="M2 13C2 5 20 3 20 12c0 4-5 2-5 5s-2 5-6 4-7-4-7-8z" fill="#c9dce8" /><circle cx="7" cy="10" r="2" fill="#e23e3a" /><circle cx="12" cy="8" r="2" fill="#35a846" /><circle cx="6" cy="15" r="2" fill="#2d78d6" /><circle cx="10" cy="17" r="1.5" fill="#f0b020" /><path d="M21 1 15 20" stroke="#c48a4c" strokeWidth="2.5" /></>],
  ["Chrome", <><circle cx="12" cy="12" r="11" fill="#fbc116" /><path d="M12 12 2.5 6.5A11 11 0 0 1 21.5 6.5z" fill="#e33b2e" /><path d="M2.5 6.5A11 11 0 0 0 11 23l4-8-3-3z" fill="#2ba24c" /><circle cx="12" cy="12" r="5.5" fill="#fff" /><circle cx="12" cy="12" r="4.3" fill="#3f83f0" /></>],
  ["Bourse", <g fill="none" strokeWidth="3"><path d="M11 2 2 12l9 9v-6l-3-3 4-5" stroke="#1d4fa0" /><path d="m13 3 9 9-9 9v-5" stroke="#174084" /><path d="M11 12h6" stroke="#2458b4" strokeWidth="2.5" /></g>],
  ["ProRealTime", <><path d="M6 8v14" stroke="#c0393c" /><path d="M3 11h7v9H3z" fill="#f26a6d" /><path d="M18 0v21" stroke="#138a2a" /><path d="M15 3h7v15h-7z" fill="#3ad34e" /></>],
];

function Taskbar() {
  return (
    <footer className="flex h-[38px] items-stretch bg-[#101112] pr-1 text-[#e6e6e6]">
      <div className="-ml-[6px] flex">
        {APPS.map(([name, art]) => (
          <button
            key={name}
            aria-label={name}
            className={`flex w-[46px] items-center justify-center border-b-2 ${name === "ProRealTime" ? "border-[#9a9a9a] bg-[#343536]" : name === "Chrome" ? "border-[#b5b5b5]" : "border-transparent"}`}
          >
            <svg width="24" height="24" viewBox="0 0 24 24">{art}</svg>
          </button>
        ))}
      </div>
      <div className="ml-auto flex flex-col items-center justify-center text-[10px] leading-[17px]">
        <time>09:55</time>
        <time>30/10/2023</time>
      </div>
    </footer>
  );
}

export default function App() {
  return (
    <div className="min-w-[1400px] overflow-hidden bg-white font-[family-name:'Noto_Sans',sans-serif] text-[10px] leading-[14px] text-[#111]">
      <MenuBar />
      <Toolbar />
      <InstrumentBar />
      <TradePanel />
      <Chart />
      <BottomBar />
      <Taskbar />
    </div>
  );
}
